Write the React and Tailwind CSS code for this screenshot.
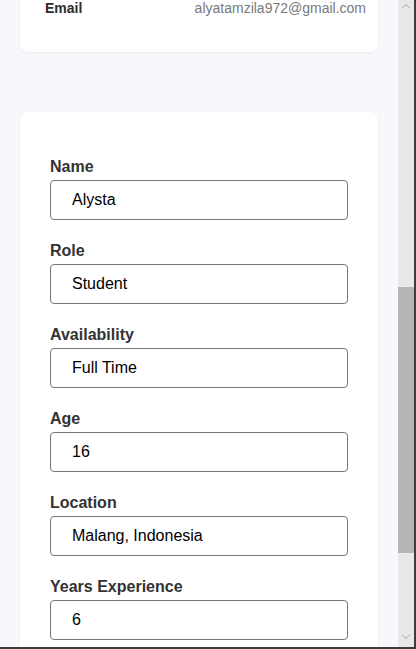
const fields = [
  { label: 'Name', value: 'Alysta' },
  { label: 'Role', value: 'Student' },
  { label: 'Availability', value: 'Full Time' },
  { label: 'Age', value: '16' },
  { label: 'Location', value: 'Malang, Indonesia' },
  { label: 'Years Experience', value: '6' },
]

const Chevron = ({ up }) => (
  <svg width="10" height="6" viewBox="0 0 10 6" fill="none" stroke="#a3a3a3" strokeWidth="1">
    {up ? <path d="M1 5.5 L5 1.5 L9 5.5" /> : <path d="M1 0.5 L5 4.5 L9 0.5" />}
  </svg>
)

const App = () => {
  return (
    <div
      className="w-[416px] h-[649px] flex overflow-hidden border-r-2 border-b-2 border-[#3d3d3d] bg-[#f7f8fc]"
      style={{ fontFamily: '"Liberation Sans", Arial, sans-serif' }}
    >
      <div className="flex-1 overflow-hidden px-5">
        <div className="-mt-[30px] pt-[28px] pb-[34px] bg-white rounded-lg shadow-[0_1px_3px_rgba(0,0,0,0.05)]">
          <div className="flex items-center justify-between pl-[25px] pr-[12px] text-sm leading-5">
            <span className="font-bold text-[#2d2d2d]">Email</span>
            <span className="text-[#7a7a7a]">alyatamzila972@gmail.com</span>
          </div>
        </div>

        <div className="mt-[60px] bg-white rounded-lg shadow-[0_1px_3px_rgba(0,0,0,0.05)] px-[30px] pt-[46px] pb-8">
          {fields.map((f) => (
            <div key={f.label} className="mb-[22px]">
              <label className="block text-base leading-[18px] font-bold text-[#333333] mb-1">
                {f.label}
              </label>
              <input
                readOnly
                value={f.value}
                className="block w-full h-10 px-[21px] border border-[#767676] rounded-[4px] text-base text-black bg-white outline-none"
              />
            </div>
          ))}
        </div>
      </div>

      <div className="w-4 h-full flex flex-col bg-[#e8e8e8]">
        <div className="h-[287px] flex justify-center pt-[3px]">
          <Chevron up />
        </div>
        <div className="h-[266px] bg-[#b5b5b5]" />
        <div className="flex-1 flex flex-col justify-end items-center pb-[7px]">
          <Chevron />
        </div>
      </div>
    </div>
  )
}

export default App
